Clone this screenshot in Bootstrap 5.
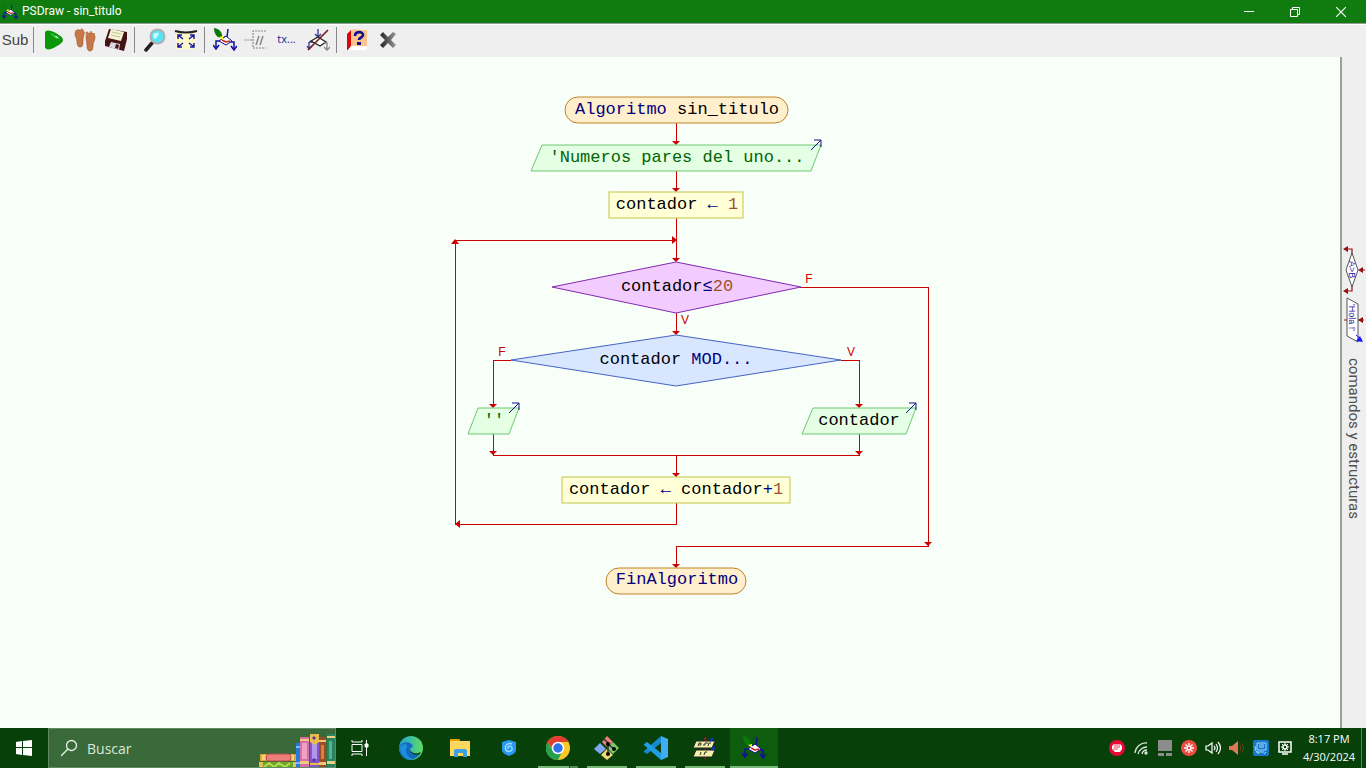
<!DOCTYPE html>
<html lang="es">
<head>
<meta charset="utf-8">
<meta name="viewport" content="width=device-width, initial-scale=1">
<title>PSDraw - sin_titulo</title>
<link rel="stylesheet" href="https://cdn.jsdelivr.net/npm/bootstrap@5.3.0/dist/css/bootstrap.min.css">
<style>
body{font-family:"Open Sans","Noto Sans",sans-serif;background:#f8fff8;color:#000}
button{border:0;background:none;padding:0;flex:none;display:flex;align-items:center;justify-content:center}
svg{display:block;flex:none}
.titlebar{background:#107c10;color:#fff;height:23px;padding:0 2px;font:12px/23px Roboto,sans-serif}
.winbtn{width:46px;height:23px;color:#fff}
.toolbar{background:#efefef;border-top:1px solid #999;box-shadow:inset 0 1px #fff;height:34px;padding-bottom:2px}
.tool{width:31px;height:31px}
.tool-sub{width:30px;font:15px "Liberation Sans",sans-serif;color:#444}
.tool-txt{font-size:11px;color:#22229a}
.rule{width:1px;height:26px;background:#888;margin:0 4px 0 3px}
.sidepanel{width:26px;background:#efefef;border-left:2px solid #9c9f9c;padding-bottom:24px}
.sidetext{writing-mode:vertical-rl;font:15px/22px Roboto,sans-serif;color:#505050;margin-top:12px}
.flow text{font:17px "Liberation Mono",monospace;text-anchor:middle;white-space:pre}
.flow .branch{font:12px "Liberation Sans",sans-serif;fill:#c80000}
.flow .wires{fill:none;stroke:#cc0000;shape-rendering:crispEdges}
.flow .heads{fill:#cc0000}
.kw{fill:#00007f}.num{fill:#a0522d}.str{fill:#006400}
.taskbar-x{background:#08400a;height:40px;color:#fff}
.start{width:48px;height:40px}
.searchbox{width:288px;height:40px;background:#3a693a;border:1px solid #648764}
.searchbox input{background:none;border:0;outline:0;color:#e4ede4;font-size:14px;width:150px}
.searchbox input::placeholder{color:#dce7dc;opacity:1}
.app{width:48px;height:40px;margin-left:1px;position:relative}
.app.view{width:50px;margin:0;padding-right:2px}
.run::after{content:"";position:absolute;bottom:0;left:4px;right:4px;height:2px;background:#77b777}
.run.multi::after{right:4px;background:linear-gradient(90deg,#77b777 31px,#184c18 31px 32px,#578857 32px)}
.run.active{background:#0e5c0e}
.run.active::after{left:0;right:0}
.tray{width:24px;height:40px}
.clock{width:64px;font-size:11px;line-height:18px}
.peek{width:5px;height:40px;border-left:1px solid #5d855d}
</style>
</head>
<body class="d-flex flex-column min-vh-100 m-0">
<svg width="0" height="0" class="position-absolute" aria-hidden="true">
  <symbol id="ps" viewBox="0 0 24 24">
    <path d="M3 20v-7h4l5-4 6 5h3v7M14 9l1-8" fill="none" stroke="#10109a" stroke-width="1.500"/>
    <path d="M0 17l3 4 3-4M18 18l3 4 3-4" fill="none" stroke="#10109a" stroke-width="1.600"/>
    <path d="M6 13l7-5 6 5-6 4z" fill="#fff" stroke="#10109a"/>
    <path d="M9 12l4 2 4-1" fill="none" stroke="#d02020" stroke-width="1.600"/>
    <path d="M1 0c6 1 9 5 8 10C4 10 1 6 1 0z" fill="#087a08"/>
    <path d="M6 9l4-1v4z" fill="#f8f820"/>
  </symbol>
</svg>

<header class="titlebar d-flex align-items-center">
  <svg width="16" height="16"><use href="#ps" width="16" height="16"/></svg>
  <span class="flex-grow-1 px-1">PSDraw - sin_titulo</span>
  <button class="winbtn" aria-label="Minimizar"><svg width="10" height="10"><path d="M0 4h10v1H0z" fill="#fff"/></svg></button>
  <button class="winbtn" aria-label="Restaurar"><svg width="10" height="10" fill="none" stroke="#fff"><path d="M.5 2.500h7v7h-7zM2.500 2V.5h7v7H8"/></svg></button>
  <button class="winbtn" aria-label="Cerrar"><svg width="10" height="10" stroke="#fff" stroke-width="1.200"><path d="M0 0l10 10M10 0L0 10"/></svg></button>
</header>

<nav class="toolbar d-flex align-items-center" aria-label="Herramientas">
  <button class="tool tool-sub">Sub</button><span class="rule"></span>
  <button class="tool" aria-label="Ejecutar"><svg width="20" height="20"><path d="M1 3C1 0 4 0 7 1c6 2 12 6 12 9s-7 7-12 9c-3 1-6 0-6-2z" fill="#0a980a"/><path d="M6 3c4 1 9 4 10 6-2 1-8-2-10-6z" fill="#36bc36"/><path d="M12 6l2 1v1l-3-1z" fill="#fff"/></svg></button>
  <button class="tool" aria-label="Paso a paso"><svg width="22" height="24" fill="#c87848" stroke="#96522c" stroke-width=".6"><path d="M1 6C1 3 3 2 6 2s5 1 4 5c-1 3-1 4-1 7 0 4-1 5-3 5s-3-2-3-5c0-4-2-5-2-8zM12 9c0-3 2-4 5-4s4 2 4 4c0 4-2 5-2 9 0 3-1 5-3 5s-3-2-3-5-1-6-1-9z"/><g stroke="none"><circle cx="2" cy="3" r="1"/><circle cx="4" cy="2" r="1"/><circle cx="8" cy="2" r="1.500"/><circle cx="13" cy="5" r="1.500"/><circle cx="17" cy="4" r="1"/><circle cx="20" cy="6" r="1"/></g></svg></button>
  <button class="tool" aria-label="Guardar"><svg width="24" height="24"><path d="M5 1l18 3v7l-3 12L1 18V13z" fill="#441414"/><path d="M7 1l13 3-3 9L4 10z" fill="#f4f4d4"/><path d="M8 4l9 2M7 7l9 2" stroke="#c9c29c"/><path d="M7 14l9 2-1 6-10-3z" fill="#d9d9e0"/><path d="M12 16l3 1-1 4-3-1z" fill="#441414"/></svg></button>
  <span class="rule"></span>
  <button class="tool" aria-label="Zoom"><svg width="22" height="24"><path d="M2 22l6-7" stroke="#222" stroke-width="3.500" stroke-linecap="round"/><circle cx="13.500" cy="8.500" r="7" fill="#56e4f4" stroke="#b0b0b4" stroke-width="2"/><path d="M9 8c0-3 3-4 6-3-1 4-3 6-5 6z" fill="#c8fcff"/></svg></button>
  <button class="tool" aria-label="Ajustar"><svg width="24" height="22"><path d="M2 2h20v18H2z" fill="#fcf8c8"/><path d="M1 2q11 3 22 0" fill="none" stroke="#222" stroke-width="2"/><g fill="none" stroke="#1818a0" stroke-width="1.500"><path d="M4 10V6h4M4 6l5 4M16 6h4v4M20 6l-5 4M4 14v4h4M4 18l5-4M16 18h4v-4M20 18l-5-4"/></g></svg></button>
  <span class="rule"></span>
  <button class="tool" aria-label="Dibujar"><svg width="24" height="24"><use href="#ps"/></svg></button>
  <button class="tool" aria-label="Comentarios"><svg width="24" height="22" fill="none" stroke="#888"><path d="M22 2H9v17h13M0 11h8" stroke-dasharray="2 1" stroke-width="1.200"/><path d="M12 16l3-9M16 16l3-9" stroke-width="1.500"/></svg></button>
  <button class="tool tool-txt">tx...</button>
  <button class="tool" aria-label="Estilo"><svg width="24" height="24" fill="none" stroke="#333398" stroke-width="1.300"><path d="M3 14h5M12 1v8M9 6l3 3 3-3"/><path d="M5 13l7-4 8 5-6 4z" fill="#fff" stroke="#222"/><path d="M3 14v7M1 18l2 3 3-3"/><path d="M18 15h3v7M18 19l3 3 3-3" stroke="#888"/><path d="M2 22L22 2" stroke="#762020" stroke-width="1.700"/></svg></button>
  <span class="rule"></span>
  <button class="tool" aria-label="Ayuda"><svg width="22" height="24"><path d="M1 6l4-4v17l-3 3H1z" fill="#d80808"/><path d="M5 2c5-2 10 1 16 0v17H5z" fill="#fcc48c"/><path d="M2 22l3-4c5-1 10 1 16 0v4z" fill="#fff"/><path d="M9 8c0-5 8-5 8-1 0 3-4 2-4 5" fill="none" stroke="#101090" stroke-width="2.600"/><path d="M11 14h4v3h-4z" fill="#101090"/></svg></button>
  <button class="tool" aria-label="Cerrar diagrama"><svg width="20" height="20"><defs><linearGradient id="xg"><stop stop-color="#222"/><stop offset="1" stop-color="#999"/></linearGradient></defs><path d="M2 5l3-3 5 5 5-5 3 2-5 6 5 5-3 3-5-5-5 5-3-3 5-5z" fill="url(#xg)"/></svg></button>
</nav>

<main class="d-flex flex-grow-1">
  <section class="flex-grow-1 d-flex justify-content-center align-items-start">
    <!-- x = 0 is the vertical axis of the flowchart -->
    <svg class="flow" width="540" height="560" viewBox="-276 0 540 560" role="img" aria-label="Diagrama de flujo">
      <g class="wires">
        <path d="M0 66v21M0 114v20M0 161v43M0 256v21M0 445V467H-221V183H0"/>
        <path d="M124 230H252V489H0v21M-165 303H-183v47M165 303H183v47M-183 377v21H183v-21M0 398v21"/>
      </g>
      <g class="heads">
        <path d="M-4 84h8l-4 4zM-4 131h8l-4 4zM-4 201h8l-4 4zM-4 274h8l-4 4zM-4 416h8l-4 4zM-4 507h8l-4 4z"/>
        <path d="M-187 347h8l-4 4zM-187 394h8l-4 4zM179 347h8l-4 4zM179 394h8l-4 4zM248 485h8l-4 4z"/>
        <path d="M-4 179v8l5-4zM-225 187h8l-4-5zM-216 463v8l-5-4z"/>
      </g>
      <g fill="#ffefcc" stroke="#c08428"><rect x="-111" y="40" width="223" height="26" rx="13"/><rect x="-70" y="511" width="140" height="26" rx="13"/></g>
      <g fill="#e4ffe4" stroke="#6cc872"><path d="M-134 88H145L135 114H-145zM-198 351H-157L-167 377H-208zM137 351H240L230 377H126z"/></g>
      <g fill="#ffffd8" stroke="#c4c448"><rect x="-67" y="135" width="134" height="26"/><rect x="-114" y="420" width="228" height="26"/></g>
      <path d="M-124 230L0 205 125 230 0 256z" fill="#f2ccff" stroke="#8428b4"/>
      <path d="M-165 303L0 278 165 303 0 329z" fill="#d8e6ff" stroke="#4464c4"/>
      <g fill="none" stroke="#101088"><path id="out" d="M135 93l10-10M138 83h7v7"/><use href="#out" x="-302" y="263"/><use href="#out" x="95" y="263"/></g>
      <text x="1" y="57"><tspan class="kw">Algoritmo</tspan> sin_titulo</text>
      <text x="1" y="105" class="str">'Numeros pares del uno...</text>
      <text x="1" y="152">contador <tspan class="kw">←</tspan> <tspan class="num">1</tspan></text>
      <text x="1" y="234">contador<tspan class="kw">≤</tspan><tspan class="num">20</tspan></text>
      <text x="0" y="307">contador <tspan class="kw">MOD...</tspan></text>
      <text x="-182" y="368" class="str">''</text>
      <text x="183" y="368">contador</text>
      <text x="0" y="437">contador <tspan class="kw">←</tspan> contador<tspan class="kw">+</tspan><tspan class="num">1</tspan></text>
      <text x="1" y="527" class="kw">FinAlgoritmo</text>
      <g><text class="branch" x="133" y="226">F</text><text class="branch" x="9" y="267">V</text><text class="branch" x="-174" y="299">F</text><text class="branch" x="175" y="299">V</text></g>
    </svg>
  </section>
  <aside class="sidepanel d-flex flex-column align-items-center justify-content-center">
    <svg width="24" height="108" aria-hidden="true">
      <g fill="none" stroke="#931010" stroke-width="1.200"><path d="M3 11h7v6M3 53h7v-6M23 32h-5M2 82h20"/></g>
      <path d="M1 11l5-3v6zM1 53l5-3v6zM16 32l5-3v6zM16 82l5-3v6z" fill="#931010"/>
      <path d="M10 15l6 17-6 17-6-17z" fill="#fff" stroke="#555"/>
      <path d="M5 60l11 6v38l-11-6z" fill="#fff" stroke="#555"/>
      <path d="M14 97l6 5" stroke="#1818ff"/><path d="M21 104l-7-1 4-5z" fill="#1818ff"/>
      <g fill="#2020a0" font-family="Liberation Sans" font-size="9"><text transform="translate(7 23) rotate(90)">A&gt;B</text><text transform="translate(7 66) rotate(90)">'Hola !'</text></g>
    </svg>
    <span class="sidetext mb-1">comandos y estructuras</span>
  </aside>
</main>

<footer class="taskbar-x d-flex align-items-center">
  <button class="start" aria-label="Inicio"><svg width="16" height="16" fill="#fff"><path d="M0 2l6-1v6H0zM7 1l9-1v7H7zM0 8h6v7l-6-1zM7 8h9v8l-9-1z"/></svg></button>
  <div class="searchbox d-flex align-items-center ps-2">
    <label for="q" class="ms-1" aria-label="Buscar"><svg width="18" height="18" fill="none" stroke="#e6f0e6" stroke-width="1.300"><circle cx="10.500" cy="6.500" r="5"/><path d="M7 10l-7 7"/></svg></label>
    <input id="q" class="ms-2 px-0" type="text" placeholder="Buscar">
    <svg class="ms-auto" width="76" height="38">
      <path d="M1 25h36v7H1z" fill="#e0a83c"/><path d="M3 26h32v5H3z" fill="#f4d078"/><rect x="7" y="25" width="25" height="7" rx="3" fill="#ec8078" stroke="#b44c4c"/>
      <path d="M0 33h38v5H0z" fill="#68a828"/><path d="M5 38l5-4 5 4 5-4 6 4 5-4" stroke="#b0dc50" stroke-width="2" fill="none"/><path d="M0 33h4v5H0zM34 33h4v5h-4z" fill="#e8c050"/>
      <path d="M37 14h4v24h-4z" fill="#2878dc"/><path d="M37 17h4v2h-4zM37 33h4v2h-4z" fill="#78b8ff"/>
      <path d="M41 8h9v30h-9z" fill="#d470a4"/><path d="M43 14h5v16h-5z" fill="#f0a0c4"/><path d="M41 10h9v2h-9zM41 32h9v3h-9z" fill="#f0c880"/>
      <path d="M51 5h9v33h-9z" fill="#8058c8"/><path d="M53 14h5v16h-5z" fill="#b494ec"/><path d="M51 5h9v8l-4 3-5-3zM51 34h9v2h-9z" fill="#ecbc48"/><path d="M55 7l2 2-2 2-2-2zM55 29l2 2-2 2-2-2z" fill="#5438a8"/>
      <path d="M60 8h7v30h-7z" fill="#9c4c20"/><path d="M62 16h3v14h-3z" fill="#d08040"/><path d="M60 11h7v2h-7zM60 33h7v3h-7z" fill="#ecc878"/>
      <path d="M68 5h8v33h-8z" fill="#288460"/><path d="M70 12h3v18h-3z" fill="#58b488"/><path d="M68 7h8v2h-8zM68 32h8v3h-8z" fill="#e8d080"/>
    </svg>
  </div>
  <button class="app view" aria-label="Vista de tareas"><svg width="18" height="16" fill="none" stroke="#fff"><path d="M1 4.500h10v7H1zM1 0v2h10V0M1 16v-2h10v2M15.500 0v16"/><path d="M14 4h3v3h-3z" fill="#fff"/></svg></button>
  <button class="app" aria-label="Edge"><svg width="24" height="24"><defs><linearGradient id="eg"><stop stop-color="#20a4dc"/><stop offset="1" stop-color="#60dc60"/></linearGradient></defs><circle cx="12" cy="12" r="12" fill="url(#eg)"/><path d="M0 12C1 5 13 4 14 11c-5 0-4 8 7 7-5 8-20 8-21-6z" fill="#1468c0"/><path d="M8 11c-3 6 2 12 8 12-9 2-15-4-15-12 2-4 8-4 7 0z" fill="#1c90d8"/><path d="M11 13c0 3 5 6 11 3l-1 2c-4 2-10 0-10-5z" fill="#08400a"/></svg></button>
  <button class="app" aria-label="Explorador"><svg width="22" height="20"><path d="M1 1h9l1 2h10v15H1z" fill="#ffd75c"/><path d="M1 1h9l1 2H1z" fill="#e8a000"/><path d="M5 19v-6q0-2 2-2h9q2 0 2 2v6h-4v-4H9v4z" fill="#3ca0e4"/></svg></button>
  <button class="app" aria-label="Escudo"><svg width="16" height="16"><path d="M1 2l7-2 7 2v8c0 3-4 5-7 6-3-1-7-3-7-6z" fill="#2898f0"/><path d="M11 4C6 2 3 7 5 10s7 1 6-2-5-2-4 1" fill="none" stroke="#9cdcfc" stroke-width="1.400"/></svg></button>
  <button class="app run multi" aria-label="Chrome"><svg width="24" height="24"><circle cx="12" cy="12" r="12" fill="#fcc828"/><path d="M12 24A12 12 0 0 1 1.600 6L7 15l5 2 4-1z" fill="#24a050"/><path d="M1.600 6A12 12 0 0 1 22.400 6H12L7 14z" fill="#e43c30"/><circle cx="12" cy="12" r="5.500" fill="#3070e8" stroke="#fff" stroke-width="1.500"/></svg></button>
  <button class="app run" aria-label="Git"><svg width="26" height="24"><path d="M13 0l6 6-6 5-5-5z" fill="#f08080"/><path d="M6 7l6 6-6 5-6-5z" fill="#80a8f0"/><path d="M13 13l6 6-6 5-6-5z" fill="#f0d878"/><path d="M19 6l6 6-6 6-6-6z" fill="#80c868"/><path d="M10 3l4 4v11M14 8l6 5" fill="none" stroke="#333" stroke-width="1.500"/><circle cx="14" cy="8" r="2"/><circle cx="20" cy="13" r="2"/><circle cx="14" cy="18" r="2"/></svg></button>
  <button class="app run" aria-label="Visual Studio Code"><svg width="24" height="24"><path d="M17 0l7 3v18l-7 3z" fill="#40acf4"/><path d="M17 0v7L3 18l-3-2v-1z" fill="#1888d0"/><path d="M17 24v-7L3 6 0 8v1z" fill="#209ce4"/></svg></button>
  <button class="app run" aria-label="PSeInt"><svg width="24" height="22"><path d="M12 0v22" stroke="#842020" stroke-width="2"/><path d="M3 4h19l-3 7H0zM3 13h19l-3 7H0z" fill="#f4f0a8" stroke="#222"/><path d="M5 9l1-3h2v2H6M10 8h2V6h3M15 9l1-3h2M7 18l1-3M11 18l1-3h2" fill="none" stroke="#333"/><path d="M17 4l3-3M19 13l3-3" stroke="#1030d0" stroke-width="2"/></svg></button>
  <button class="app run active" aria-label="PSDraw"><svg width="24" height="24"><use href="#ps"/></svg></button>

  <div class="d-flex align-items-center ms-auto">
    <button class="tray" aria-label="Puño"><svg width="16" height="16"><circle cx="8" cy="8" r="8" fill="#e80838"/><path d="M3 6l2-2h6l2 2v3l-2 3H6L3 9z" fill="#fff"/><path d="M6 4v4M8 4v4M10 4v4M4 9h5" stroke="#e80838" stroke-width=".8"/></svg></button>
    <button class="tray" aria-label="Wi-Fi"><svg width="14" height="14" fill="none" stroke="#d8e8d8" stroke-width="1.300"><path d="M1 12A11 11 0 0 1 13 2M4 13a9 9 0 0 1 9-7M8 13a5 5 0 0 1 5-4"/><circle cx="12" cy="12" r="1" fill="#fff"/></svg></button>
    <button class="tray" aria-label="Panel táctil"><svg width="14" height="16" fill="#8c8c8c"><path d="M0 0h14v11H0zM0 13h6v3H0zM8 13h6v3H8z"/></svg></button>
    <button class="tray" aria-label="Estado"><svg width="16" height="16"><circle cx="8" cy="8" r="8" fill="#ec4c40"/><path d="M8 3v10M3 8h10M4.500 4.500l7 7M11.500 4.500l-7 7" stroke="#fff" stroke-width="1.400"/><circle cx="8" cy="8" r="1.200" fill="#ec4c40"/></svg></button>
    <button class="tray" aria-label="Volumen"><svg width="17" height="14" fill="none" stroke="#fff" stroke-width="1.200"><path d="M1 5h2l4-3v10L3 9H1zM9 5q2 2 0 4M11 3q3 4 0 8M13 1q5 6 0 12"/></svg></button>
    <button class="tray" aria-label="Audio"><svg width="16" height="14"><path d="M0 5h3l6-5v14L3 9H0z" fill="#e07858"/><path d="M11 4q2 3 0 6M13 2q3 5 0 10" fill="none" stroke="#683c18"/></svg></button>
    <button class="tray" aria-label="Gráficos"><svg width="16" height="16"><rect width="16" height="16" rx="2" fill="#1878c8"/><path d="M4 3h9v7H4zM3 12h8M2 6q-1 5 4 8M13 12l-2 2M6 5h5M6 7h5" fill="none" stroke="#a4dcff"/></svg></button>
    <button class="tray" aria-label="Ajustes"><svg width="14" height="14" fill="none" stroke="#fff"><path d="M1 1h12v10H1zM4 13h6" stroke-width="1.500"/><circle cx="7" cy="6" r="2" stroke-width="1.500"/><path d="M7 2v2M7 8v2M3 6h2M9 6h2M4 3l1 1M10 3L9 4M4 9l1-1M10 9L9 8"/></svg></button>
    <div class="clock text-center">8:17 PM<br>4/30/2024</div>
    <span class="peek"></span>
  </div>
</footer>
<script src="https://cdn.jsdelivr.net/npm/bootstrap@5.3.0/dist/js/bootstrap.bundle.min.js"></script>
</body>
</html>
